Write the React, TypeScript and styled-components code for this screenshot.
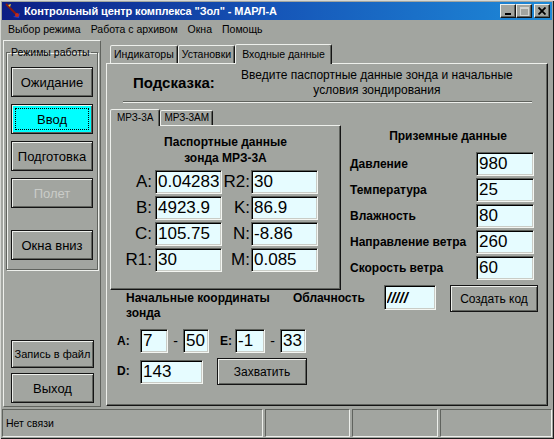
import React from 'react';
import styled, { createGlobalStyle } from 'styled-components';

const FACE = '#a2a5a0';
const HI = '#eef0ec';
const SH = '#60635e';
const DK = '#141414';
const FIELD = '#e6fcff';
const FONT = '"Liberation Sans", Arial, sans-serif';

const GlobalStyle = createGlobalStyle`
  html, body { margin: 0; padding: 0; background: ${FACE}; }
  body { font-family: ${FONT}; font-size: 11px; color: #000; }
  *, *::before, *::after { box-sizing: border-box; }
`;

const Window = styled.div`
  width: 554px;
  height: 439px;
  padding: 2px;
  display: flex;
  flex-direction: column;
  background: ${FACE};
  box-shadow: inset 1px 1px #d6d8d4, inset -1px -1px #1c1c1c;
  overflow: hidden;
`;

const TitleBar = styled.div`
  height: 18px;
  display: flex;
  align-items: center;
  padding: 0 2px 0 3px;
  background: linear-gradient(90deg, #0c1d84 0%, #1656b8 50%, #1e8ad8 100%);
  color: #fff;
`;

const TitleText = styled.span`
  flex: 1;
  margin-left: 3px;
  font-weight: bold;
  font-size: 11px;
  letter-spacing: -0.1px;
  white-space: nowrap;
`;

const CaptionBtn = styled.div<{ $gap?: number }>`
  width: 16px;
  height: 14px;
  margin-left: ${p => p.$gap ?? 0}px;
  background: ${FACE};
  border: 1px solid;
  border-color: ${HI} ${DK} ${DK} ${HI};
  box-shadow: inset -1px -1px ${SH};
  display: flex;
  align-items: center;
  justify-content: center;
`;

const MenuBar = styled.div`
  height: 18px;
  display: flex;
  align-items: center;
  padding-left: 1px;
`;

const MenuItem = styled.span`
  padding: 0 5px;
  font-size: 10.5px;
  white-space: nowrap;
`;

const Body = styled.div`
  flex: 1;
  min-height: 0;
  display: flex;
  gap: 5px;
  padding: 2px 4px 0 1px;
`;

const LeftPanel = styled.div`
  width: 98px;
  display: flex;
  flex-direction: column;
  justify-content: space-between;
  padding: 5px 2px 3px 2px;
  border: 1px solid;
  border-color: ${HI} ${SH} ${SH} ${HI};
`;

const GroupBox = styled.fieldset`
  margin: 0;
  padding: 8px 4px 9px 4px;
  min-width: 0;
  border: 1px solid ${SH};
  box-shadow: 1px 1px 0 ${HI}, inset 1px 1px 0 ${HI};
  display: flex;
  flex-direction: column;
  gap: 7px;
`;

const Legend = styled.legend`
  padding: 0 1px;
  margin-left: -1px;
  font-size: 10.5px;
  line-height: 13px;
  white-space: nowrap;
`;

const ButtonStack = styled.div`
  display: flex;
  flex-direction: column;
  gap: 5px;
  padding: 0 4px 0 5px;
`;

const Btn = styled.button<{ $w?: number; $h: number; $fs?: number; $cyan?: boolean; $mt?: number }>`
  display: flex;
  align-items: center;
  justify-content: center;
  flex-shrink: 0;
  width: ${p => (p.$w ? `${p.$w}px` : '100%')};
  height: ${p => p.$h}px;
  margin: ${p => p.$mt ?? 0}px 0 0 0;
  padding: 3px;
  background: ${p => (p.$cyan ? '#00ffff' : FACE)};
  border: 1px solid ${DK};
  box-shadow: inset 1px 1px ${HI}, inset -1px -1px ${SH};
  font-family: ${FONT};
  font-size: ${p => p.$fs ?? 13}px;
  color: #000;
  white-space: nowrap;

  &:disabled {
    color: #caccc8;
  }
`;

const FocusRect = styled.span`
  flex: 1;
  align-self: stretch;
  display: flex;
  align-items: center;
  justify-content: center;
  border: 1px dotted #000;
`;

const TabControl = styled.div<{ $w?: number }>`
  display: flex;
  flex-direction: column;
  ${p => (p.$w ? `width: ${p.$w}px;` : 'flex: 1;')}
`;

const TabStrip = styled.div<{ $h: number; $pl: number }>`
  height: ${p => p.$h}px;
  display: flex;
  align-items: flex-end;
  padding-left: ${p => p.$pl}px;
`;

const Tab = styled.div<{ $h: number; $active?: boolean; $fs?: number }>`
  position: relative;
  z-index: ${p => (p.$active ? 1 : 0)};
  height: ${p => p.$h}px;
  margin-bottom: ${p => (p.$active ? -1 : 0)}px;
  padding: 0 ${p => (p.$active ? 6 : 3)}px 1px;
  display: flex;
  align-items: center;
  background: ${FACE};
  border: 1px solid;
  border-bottom: none;
  border-color: ${HI} ${DK} transparent ${HI};
  border-radius: 2px 2px 0 0;
  box-shadow: inset -1px 0 ${SH};
  font-size: ${p => p.$fs ?? 10.5}px;
  white-space: nowrap;
`;

const TabPage = styled.div<{ $h?: number }>`
  ${p => (p.$h ? `height: ${p.$h}px;` : 'flex: 1; margin-bottom: 1px;')}
  display: flex;
  flex-direction: column;
  border: 1px solid;
  border-color: ${HI} ${DK} ${DK} ${HI};
  box-shadow: inset -1px -1px ${SH};
`;

const HintRow = styled.div`
  height: 37px;
  display: flex;
  align-items: center;
`;

const HintLabel = styled.div`
  margin-left: 26px;
  font-size: 15px;
  font-weight: bold;
  white-space: nowrap;
`;

const HintText = styled.div`
  flex: 1;
  margin: 0 12px 0 4px;
  text-align: center;
  font-size: 12px;
  line-height: 15px;
`;

const Groove = styled.div`
  height: 2px;
  margin: 0 15px 0 16px;
  border-top: 1px solid ${SH};
  border-bottom: 1px solid ${HI};
`;

const MainRow = styled.div`
  display: flex;
  align-items: flex-start;
  margin: 5px 0 0 3px;
`;

const SectionTitle = styled.div<{ $pt?: number; $pl?: number }>`
  padding: ${p => p.$pt ?? 0}px 0 0 ${p => p.$pl ?? 0}px;
  text-align: center;
  font-size: 12px;
  font-weight: bold;
  line-height: 16px;
`;

const ProbeGrid = styled.div`
  display: grid;
  grid-template-columns: 44px 67px 29px 67px;
  grid-auto-rows: 24px;
  row-gap: 2px;
  margin-top: 4px;
  align-items: center;
`;

const BigLabel = styled.span<{ $pr: number }>`
  padding-right: ${p => p.$pr}px;
  text-align: right;
  font-size: 17px;
`;

const Field = styled.input<{ $w: number; $h?: number; $fs?: number; $italic?: boolean }>`
  width: ${p => p.$w}px;
  height: ${p => p.$h ?? 24}px;
  margin: 0;
  padding: 0 2px;
  background: ${FIELD};
  border: 1px solid;
  border-color: #5c5f5a #f4f6f2 #f4f6f2 #5c5f5a;
  box-shadow: inset 1px 1px #000, inset -1px -1px #c9ccc6;
  font-family: ${FONT};
  font-size: ${p => p.$fs ?? 16}px;
  font-style: ${p => (p.$italic ? 'italic' : 'normal')};
  font-weight: ${p => (p.$italic ? 'bold' : 'normal')};
  color: #000;
  outline: none;
`;

const Ground = styled.div`
  width: 184px;
  margin-left: 9px;
  padding-top: 20px;
`;

const GroundGrid = styled.div`
  display: grid;
  grid-template-columns: 1fr 58px;
  grid-auto-rows: 24px;
  row-gap: 2px;
  margin-top: 8px;
  align-items: center;
`;

const BoldLabel = styled.span<{ $w?: number }>`
  ${p => (p.$w ? `width: ${p.$w}px;` : '')}
  flex-shrink: 0;
  font-size: 12px;
  font-weight: bold;
  line-height: 15px;
  white-space: nowrap;
`;

const BottomRow = styled.div`
  display: flex;
  align-items: flex-start;
  margin: -5px 0 0 19px;
`;

const TopText = styled.div<{ $w?: number }>`
  ${p => (p.$w ? `width: ${p.$w}px;` : '')}
  padding-top: 6px;
  font-size: 12px;
  font-weight: bold;
  line-height: 15px;
  white-space: nowrap;
`;

const CoordRow = styled.div<{ $mt: number }>`
  display: flex;
  align-items: center;
  margin: ${p => p.$mt}px 0 0 10px;
`;

const Dash = styled.span`
  width: 15px;
  text-align: center;
  font-size: 14px;
`;

const Spacer = styled.div<{ $w: number }>`
  width: ${p => p.$w}px;
  flex-shrink: 0;
`;

const StatusBar = styled.div`
  height: 28px;
  margin-top: 2px;
  display: flex;
  gap: 2px;
`;

const StatusPanel = styled.div<{ $w?: number }>`
  ${p => (p.$w ? `width: ${p.$w}px;` : 'flex: 1;')}
  display: flex;
  align-items: center;
  padding-left: 3px;
  border: 1px solid;
  border-color: ${SH} ${HI} ${HI} ${SH};
  font-size: 10.5px;
`;

const probe = [
  ['A:', '0.04283', 'R2:', '30'],
  ['B:', '4923.9', 'K:', '86.9'],
  ['C:', '105.75', 'N:', '-8.86'],
  ['R1:', '30', 'M:', '0.085'],
];

const ground = [
  ['Давление', '980'],
  ['Температура', '25'],
  ['Влажность', '80'],
  ['Направление ветра', '260'],
  ['Скорость ветра', '60'],
];

function AppIcon() {
  return (
    <svg width="16" height="16" viewBox="0 0 16 16">
      <path d="M1 1 L12 12" stroke="#8a1a10" strokeWidth="2" />
      <path d="M3 2 L6 1 L5 4 Z" fill="#e8d040" />
      <path d="M8 14 L15 10 L14 15 Z" fill="#2a3cc8" />
      <circle cx="12" cy="12" r="2" fill="#c02818" />
    </svg>
  );
}

export default function App() {
  return (
    <>
      <GlobalStyle />
      <Window>
        <TitleBar>
          <AppIcon />
          <TitleText>Контрольный центр комплекса "Зол" - МАРЛ-А</TitleText>
          <CaptionBtn>
            <svg width="8" height="8" viewBox="0 0 8 8"><rect x="1" y="6" width="6" height="2" fill="#000" /></svg>
          </CaptionBtn>
          <CaptionBtn>
            <svg width="9" height="9" viewBox="0 0 9 9"><rect x="0.5" y="0.5" width="8" height="8" fill="none" stroke="#d2d4d0" /><rect x="0" y="0" width="9" height="2" fill="#d2d4d0" /></svg>
          </CaptionBtn>
          <CaptionBtn $gap={2}>
            <svg width="8" height="8" viewBox="0 0 8 8"><path d="M0.5 0.5 L7.5 7.5 M7.5 0.5 L0.5 7.5" stroke="#000" strokeWidth="1.8" /></svg>
          </CaptionBtn>
        </TitleBar>

        <MenuBar>
          <MenuItem>Выбор режима</MenuItem>
          <MenuItem>Работа с архивом</MenuItem>
          <MenuItem>Окна</MenuItem>
          <MenuItem>Помощь</MenuItem>
        </MenuBar>

        <Body>
          <LeftPanel>
            <GroupBox>
              <Legend>Режимы работы</Legend>
              <Btn $h={30}>Ожидание</Btn>
              <Btn $h={30} $cyan><FocusRect>Ввод</FocusRect></Btn>
              <Btn $h={30}>Подготовка</Btn>
              <Btn $h={30} disabled>Полет</Btn>
              <Btn $h={30} $mt={15}>Окна вниз</Btn>
            </GroupBox>
            <ButtonStack>
              <Btn $h={28} $fs={11}>Запись в файл</Btn>
              <Btn $h={30}>Выход</Btn>
            </ButtonStack>
          </LeftPanel>

          <TabControl>
            <TabStrip $h={23} $pl={4}>
              <Tab $h={18}>Индикаторы</Tab>
              <Tab $h={18}>Установки</Tab>
              <Tab $h={20} $active>Входные данные</Tab>
            </TabStrip>
            <TabPage>
              <HintRow>
                <HintLabel>Подсказка:</HintLabel>
                <HintText>
                  Введите паспортные данные зонда и начальные<br />условия зондирования
                </HintText>
              </HintRow>
              <Groove />

              <MainRow>
                <TabControl $w={231}>
                  <TabStrip $h={17} $pl={0}>
                    <Tab $h={17} $fs={10} $active>МРЗ-3А</Tab>
                    <Tab $h={15} $fs={10}>МРЗ-3АМ</Tab>
                  </TabStrip>
                  <TabPage $h={165}>
                    <SectionTitle $pt={8}>Паспортные данные<br />зонда МРЗ-3А</SectionTitle>
                    <ProbeGrid>
                      {probe.map(([l1, v1, l2, v2]) => (
                        <React.Fragment key={l1}>
                          <BigLabel $pr={3}>{l1}</BigLabel>
                          <Field readOnly $w={67} value={v1} $fs={17} />
                          <BigLabel $pr={1}>{l2}</BigLabel>
                          <Field readOnly $w={67} value={v2} $fs={17} />
                        </React.Fragment>
                      ))}
                    </ProbeGrid>
                  </TabPage>
                </TabControl>

                <Ground>
                  <SectionTitle $pl={12}>Приземные данные</SectionTitle>
                  <GroundGrid>
                    {ground.map(([label, value]) => (
                      <React.Fragment key={label}>
                        <BoldLabel>{label}</BoldLabel>
                        <Field readOnly $w={58} value={value} $fs={17} />
                      </React.Fragment>
                    ))}
                  </GroundGrid>
                </Ground>
              </MainRow>

              <BottomRow>
                <TopText $w={167}>Начальные координаты<br />зонда</TopText>
                <TopText $w={91}>Облачность</TopText>
                <Field readOnly $w={52} $h={25} value="/////" $fs={15} $italic />
                <Spacer $w={14} />
                <Btn $w={88} $h={27} $fs={12}>Создать код</Btn>
              </BottomRow>

              <CoordRow $mt={8}>
                <BoldLabel $w={23}>A:</BoldLabel>
                <Field readOnly $w={28} value="7" $fs={17} />
                <Dash>-</Dash>
                <Field readOnly $w={26} value="50" $fs={17} />
                <Spacer $w={11} />
                <BoldLabel $w={15}>E:</BoldLabel>
                <Field readOnly $w={30} value="-1" $fs={17} />
                <Dash>-</Dash>
                <Field readOnly $w={26} value="33" $fs={17} />
              </CoordRow>
              <CoordRow $mt={5}>
                <BoldLabel $w={23}>D:</BoldLabel>
                <Field readOnly $w={63} value="143" $fs={17} />
                <Spacer $w={14} />
                <Btn $w={90} $h={27} $fs={12}>Захватить</Btn>
              </CoordRow>
            </TabPage>
          </TabControl>
        </Body>

        <StatusBar>
          <StatusPanel $w={261}>Нет связи</StatusPanel>
          <StatusPanel $w={85} />
          <StatusPanel $w={86} />
          <StatusPanel />
        </StatusBar>
      </Window>
    </>
  );
}
